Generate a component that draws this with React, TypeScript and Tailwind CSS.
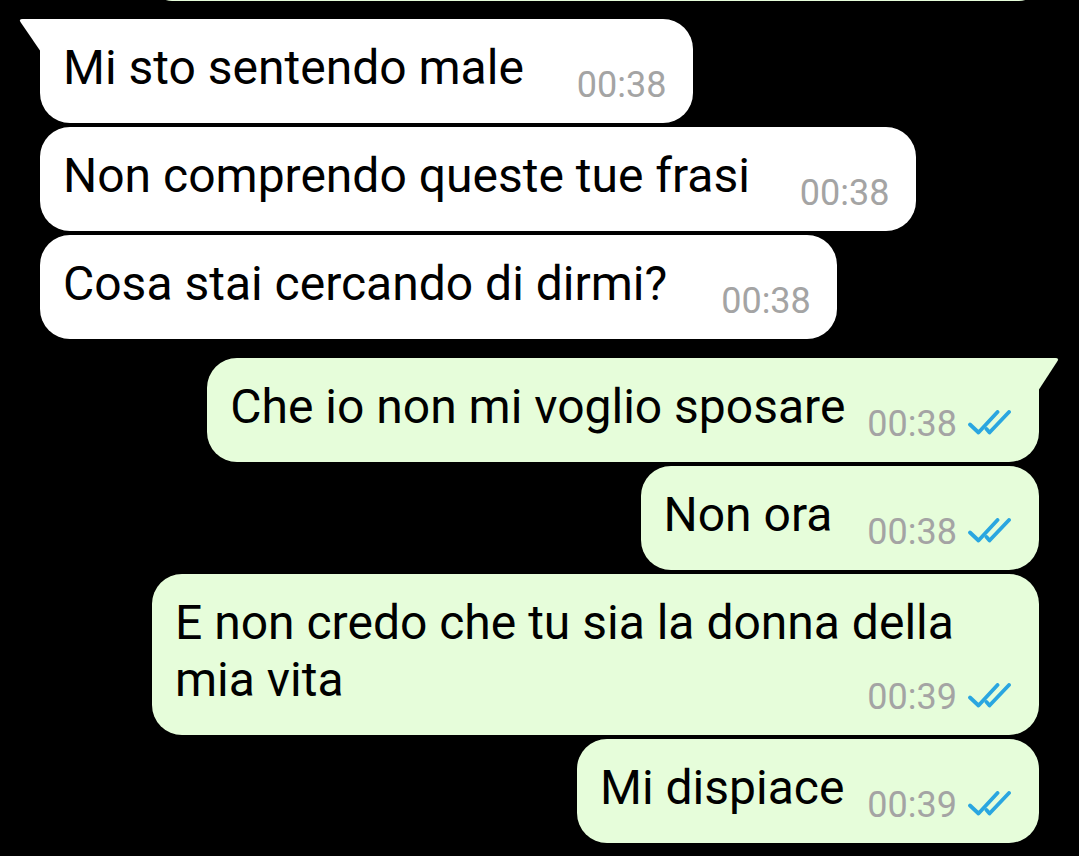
import React from 'react'

interface Msg {
  id: number
  out: boolean
  tail?: boolean
  lines: string[]
  time: string
  gap: string
  width?: string
  gapTop: string
}

const messages: Msg[] = [
  { id: 1, out: false, tail: true, lines: ['Mi sto sentendo male'], time: '00:38', gap: 'gap-[53px]', gapTop: 'mt-[18px]' },
  { id: 2, out: false, lines: ['Non comprendo queste tue frasi'], time: '00:38', gap: 'gap-[50px]', gapTop: 'mt-[4px]' },
  { id: 3, out: false, lines: ['Cosa stai cercando di dirmi?'], time: '00:38', gap: 'gap-[54px]', gapTop: 'mt-[4px]' },
  { id: 4, out: true, tail: true, lines: ['Che io non mi voglio sposare'], time: '00:38', gap: 'gap-[22px]', gapTop: 'mt-[19px]' },
  { id: 5, out: true, lines: ['Non ora'], time: '00:38', gap: 'gap-[35px]', gapTop: 'mt-[4px]' },
  {
    id: 6,
    out: true,
    lines: ['E non credo che tu sia la donna della', 'mia vita'],
    time: '00:39',
    gap: 'gap-[25px]',
    width: 'w-[887px]',
    gapTop: 'mt-[4px]',
  },
  { id: 7, out: true, lines: ['Mi dispiace'], time: '00:39', gap: 'gap-[23px]', gapTop: 'mt-[4px]' },
]

function Ticks() {
  return (
    <svg
      width="46"
      height="25"
      viewBox="0 0 46 25"
      fill="none"
      stroke="#2aa6e0"
      strokeWidth="3.8"
      strokeLinecap="round"
      strokeLinejoin="round"
    >
      <path d="M3 14.5 L11.5 22.5 L30.5 2" />
      <path d="M19.5 19 L22.5 22.5 L42 2" />
    </svg>
  )
}

function Meta({ time, read }: { time: string; read: boolean }) {
  return (
    <div className="flex items-end shrink-0">
      <span className="text-[36px] leading-[38px] text-[#a4a4a4]">{time}</span>
      {read && (
        <span className="ml-[10px] mb-[8px] flex">
          <Ticks />
        </span>
      )}
    </div>
  )
}

function Bubble({ msg }: { msg: Msg }) {
  const last = msg.lines[msg.lines.length - 1]
  const rest = msg.lines.slice(0, -1)

  return (
    <div
      className={`
        relative flex flex-col shrink-0 pt-[20px] pb-[19px] pl-[23px] pr-[26px] rounded-[30px] text-[48px] text-black
        ${msg.out ? 'self-end mr-[40px] bg-[#e6fdda]' : 'self-start ml-[40px] bg-white'}
        ${msg.tail ? (msg.out ? 'rounded-tr-none' : 'rounded-tl-none') : ''}
        ${msg.width ?? ''}
        ${msg.gapTop}
      `}
    >
      {/* bubble tail */}
      {msg.tail && !msg.out && (
        <svg className="absolute left-[-21px] top-0" width="22" height="33" viewBox="0 0 22 33">
          <path d="M22 0 H3.5 Q-0.5 0 1.8 3.6 L22 33 Z" fill="#ffffff" />
        </svg>
      )}
      {msg.tail && msg.out && (
        <svg className="absolute right-[-20px] top-0" width="21" height="33" viewBox="0 0 21 33">
          <path d="M0 0 H17.5 Q21.5 0 19.2 3.6 L0 33 Z" fill="#e6fdda" />
        </svg>
      )}

      {rest.map((line) => (
        <div key={line} className="leading-[57px] whitespace-nowrap">
          {line}
        </div>
      ))}
      <div className={`flex items-end justify-between ${msg.gap}`}>
        <span className="leading-[57px] mb-[8px] whitespace-nowrap">{last}</span>
        <Meta time={msg.time} read={msg.out} />
      </div>
    </div>
  )
}

export default function App() {
  return (
    <div className="w-[1079px] h-[856px] overflow-hidden bg-black flex flex-col [font-family:Roboto,sans-serif]">
      {/* bottom edge of the previous message, cut off by the screen */}
      <div className="shrink-0 h-[40px] -mt-[39px] ml-[152px] mr-[40px] rounded-[30px] bg-[#e6fdda]" />
      {messages.map((m) => (
        <Bubble key={m.id} msg={m} />
      ))}
    </div>
  )
}
